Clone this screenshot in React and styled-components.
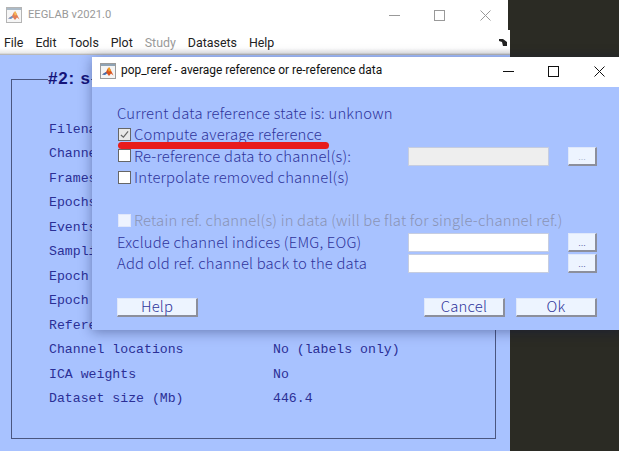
import React from "react";
import styled, { createGlobalStyle } from "styled-components";

const Global = createGlobalStyle`
  html, body { margin: 0; padding: 0; background: #2b2b24; }
  * { box-sizing: border-box; }
`;

const Desktop = styled.div`
  position: relative;
  width: 619px;
  height: 451px;
  overflow: hidden;
  background: #2b2b24;
`;

const MainWindow = styled.div`
  width: 510px;
  height: 451px;
  display: flex;
  flex-direction: column;
`;

const TitleBar = styled.div`
  flex: none;
  display: flex;
  align-items: center;
  height: ${(p) => p.$h}px;
  width: ${(p) => p.$w || "100%"};
  padding-left: ${(p) => p.$pad}px;
  padding-bottom: ${(p) => p.$pb || 0}px;
  background: #fff;
`;

const TitleText = styled.span`
  margin-left: ${(p) => p.$ml}px;
  flex: 1;
  font: ${(p) => p.$size}px/1 "Roboto", sans-serif;
  color: ${(p) => p.$color};
  white-space: nowrap;
`;

const WinButtons = styled.div`
  display: flex;
  flex: none;
`;

const WinButton = styled.span`
  width: 45.5px;
  height: 28px;
  display: flex;
  align-items: center;
  justify-content: center;
`;

const MenuBar = styled.div`
  flex: none;
  height: 25px;
  display: flex;
  align-items: center;
  gap: 12px;
  padding: 2px 0 0 4px;
  position: relative;
  background: linear-gradient(#fff 0, #fff 72%, #e9e9e9 92%, #a9a9a9 100%);
`;

const MenuItem = styled.span`
  font: 12.4px/1 "Roboto", sans-serif;
  color: ${(p) => (p.$disabled ? "#9a9a9a" : "#222")};
`;

const MenuArrow = styled.svg`
  position: absolute;
  right: 3px;
  top: 9px;
`;

const MainBody = styled.div`
  flex: 1;
  background: #a8c2ff;
  padding: 16px 14px 14px 11px;
`;

const Frame = styled.fieldset`
  margin: 0;
  height: 368px;
  padding: 38px 0 0 37px;
  border: 1px solid #4a5680;
`;

const FrameTitle = styled.legend`
  margin-left: -1px;
  padding: 0;
  white-space: nowrap;
  font: bold 17px/16px "Liberation Sans", sans-serif;
  letter-spacing: 0.8px;
  color: #14147a;
`;

const InfoRows = styled.div`
  display: grid;
  grid-template-columns: 224px 1fr;
  grid-auto-rows: 24.5px;
  align-items: center;
  margin-top: -8px;
  font: 13.2px/1 "Liberation Mono", monospace;
  color: #2b2f96;
  white-space: pre;
`;

const Dialog = styled.div`
  position: absolute;
  left: 92px;
  top: 57px;
  width: 530px;
  height: 273px;
  background: #a8c2ff;
  box-shadow: 0 2px 12px rgba(10, 20, 70, 0.4);
`;

const Form = styled.div`
  padding: 15.25px 25px 0 25px;
`;

const Row = styled.div`
  display: grid;
  grid-template-columns: 291px 141px 48px;
  height: 21.5px;
  align-items: center;
  font: 300 14.8px/1 "Noto Sans CJK JP", "Liberation Sans", sans-serif;
  letter-spacing: 0.2px;
  color: ${(p) => (p.$disabled ? "#8a93b4" : "#2f349c")};
  white-space: nowrap;
`;

const CheckLabel = styled.span`
  display: flex;
  align-items: center;
  gap: 3px;
`;

const CheckBox = styled.span`
  width: 13px;
  height: 13px;
  flex: none;
  margin-left: 1px;
  background: ${(p) => (p.$disabled ? "#eef3ff" : p.$checked ? "#e8e8e8" : "#fff")};
  border: 1px solid ${(p) => (p.$disabled ? "#dfe6fb" : "#666")};
  display: flex;
  align-items: center;
  justify-content: center;
`;

const Input = styled.span`
  display: block;
  width: 141px;
  height: 19px;
  background: ${(p) => (p.$disabled ? "#eeeeee" : "#fff")};
  border: 1px solid #c6cde0;
`;

const Small = styled.span`
  display: flex;
  align-items: flex-end;
  justify-content: center;
  margin-left: 19px;
  width: 29px;
  height: 19px;
  padding-bottom: 4px;
  font: 9px/6px "Liberation Sans", sans-serif;
  letter-spacing: 0;
  color: ${(p) => (p.$disabled ? "#a9b2cc" : "#5a62a8")};
  background: #edf4ff;
  border: 1px solid #dfe8fb;
  border-right: 2px solid #8c8f9c;
  border-bottom: 2px solid #8c8f9c;
`;

const Actions = styled.div`
  display: flex;
  align-items: center;
  margin-top: 23.25px;
`;

const Spacer = styled.div`
  flex: 1;
`;

const ActionGroup = styled.div`
  display: flex;
  gap: 11px;
`;

const Button = styled.span`
  width: 81px;
  height: 19px;
  display: flex;
  align-items: center;
  justify-content: center;
  font: 300 14.8px/1 "Noto Sans CJK JP", "Liberation Sans", sans-serif;
  letter-spacing: 0.2px;
  color: #2f349c;
  background: #edf4ff;
  border: 1px solid #dfe8fb;
  border-right: 2px solid #8c8f9c;
  border-bottom: 2px solid #8c8f9c;
`;

const RedMark = styled.div`
  position: absolute;
  left: 26px;
  top: 84.5px;
  width: 211px;
  height: 7.5px;
  border-radius: 4px;
  background: #e81c1c;
`;

const MatlabIcon = ({ dim }) => (
  <svg width="16" height="16" viewBox="0 0 16 16" style={{ opacity: dim ? 0.75 : 1, flex: "none" }}>
    <rect x="0.5" y="0.5" width="15" height="15" fill="#f4f4f4" stroke="#9b9b9b" />
    <rect x="1" y="1" width="14" height="2" fill="#8fa3b5" />
    <path d="M2 11.5 L6 9 L8 5 L9.5 4.5 L13.5 12.5 L11 10.5 L9 13 L7 10.5 Z" fill="#d9531e" />
    <path d="M2 11.5 L6 9 L7 10.5 L5 12 Z" fill="#3f6fb5" />
    <path d="M8 5 L9.5 4.5 L11 8 L8.5 8.5 Z" fill="#f2a51f" />
  </svg>
);

const MinIcon = ({ c }) => (
  <svg width="11" height="11" viewBox="0 0 11 11"><path d="M0 5.5H11" stroke={c} strokeWidth="1" fill="none" /></svg>
);
const MaxIcon = ({ c }) => (
  <svg width="11" height="11" viewBox="0 0 11 11"><rect x="0.5" y="0.5" width="10" height="10" stroke={c} fill="none" /></svg>
);
const CloseIcon = ({ c }) => (
  <svg width="11" height="11" viewBox="0 0 11 11"><path d="M0.5 0.5L10.5 10.5M10.5 0.5L0.5 10.5" stroke={c} fill="none" /></svg>
);

const Tick = () => (
  <svg width="9" height="9" viewBox="0 0 10 10"><path d="M1 5.5L3.8 8L9 1.5" stroke="#666" strokeWidth="1.3" fill="none" /></svg>
);

const info = [
  ["Filena", ""],
  ["Channe", ""],
  ["Frames", ""],
  ["Epochs", ""],
  ["Events", ""],
  ["Sampli", ""],
  ["Epoch", ""],
  ["Epoch", ""],
  ["Refere", ""],
  ["Channel locations", "No (labels only)"],
  ["ICA weights", "No"],
  ["Dataset size (Mb)", "446.4"],
];

const menus = ["File", "Edit", "Tools", "Plot", "Study", "Datasets", "Help"];

export default function App() {
  return (
    <Desktop>
      <Global />
      <MainWindow>
        <TitleBar $h={30} $w="508px" $pad={6}>
          <MatlabIcon dim />
          <TitleText $ml={6} $size={11.2} $color="#999">EEGLAB v2021.0</TitleText>
          <WinButtons>
            <WinButton><MinIcon c="#999" /></WinButton>
            <WinButton><MaxIcon c="#999" /></WinButton>
            <WinButton><CloseIcon c="#999" /></WinButton>
          </WinButtons>
        </TitleBar>
        <MenuBar>
          {menus.map((m) => (
            <MenuItem key={m} $disabled={m === "Study"}>{m}</MenuItem>
          ))}
          <MenuArrow width="8" height="7" viewBox="0 0 8 7">
            <path d="M0 0H4L8 3V7H4L3 3L0 2Z" fill="#222" />
          </MenuArrow>
        </MenuBar>
        <MainBody>
          <Frame>
            <FrameTitle>#2: s</FrameTitle>
            <InfoRows>
              {info.map(([k, v], i) => (
                <React.Fragment key={i}>
                  <span>{k}</span>
                  <span>{v}</span>
                </React.Fragment>
              ))}
            </InfoRows>
          </Frame>
        </MainBody>
      </MainWindow>

      <Dialog>
        <TitleBar $h={30} $pad={8} $pb={2}>
          <MatlabIcon />
          <TitleText $ml={5} $size={11.95} $color="#111">pop_reref - average reference or re-reference data</TitleText>
          <WinButtons>
            <WinButton><MinIcon c="#111" /></WinButton>
            <WinButton><MaxIcon c="#111" /></WinButton>
            <WinButton><CloseIcon c="#111" /></WinButton>
          </WinButtons>
        </TitleBar>
        <Form>
          <Row>Current data reference state is: unknown</Row>
          <Row>
            <CheckLabel><CheckBox $checked><Tick /></CheckBox>Compute average reference</CheckLabel>
          </Row>
          <Row>
            <CheckLabel><CheckBox />Re-reference data to channel(s):</CheckLabel>
            <Input $disabled />
            <Small $disabled>...</Small>
          </Row>
          <Row>
            <CheckLabel><CheckBox />Interpolate removed channel(s)</CheckLabel>
          </Row>
          <Row />
          <Row $disabled>
            <CheckLabel><CheckBox $disabled />Retain ref. channel(s) in data (will be flat for single-channel ref.)</CheckLabel>
          </Row>
          <Row>
            <span>Exclude channel indices (EMG, EOG)</span>
            <Input />
            <Small>...</Small>
          </Row>
          <Row>
            <span>Add old ref. channel back to the data</span>
            <Input />
            <Small>...</Small>
          </Row>
          <Actions>
            <Button>Help</Button>
            <Spacer />
            <ActionGroup>
              <Button>Cancel</Button>
              <Button>Ok</Button>
            </ActionGroup>
          </Actions>
        </Form>
        <RedMark />
      </Dialog>
    </Desktop>
  );
}
